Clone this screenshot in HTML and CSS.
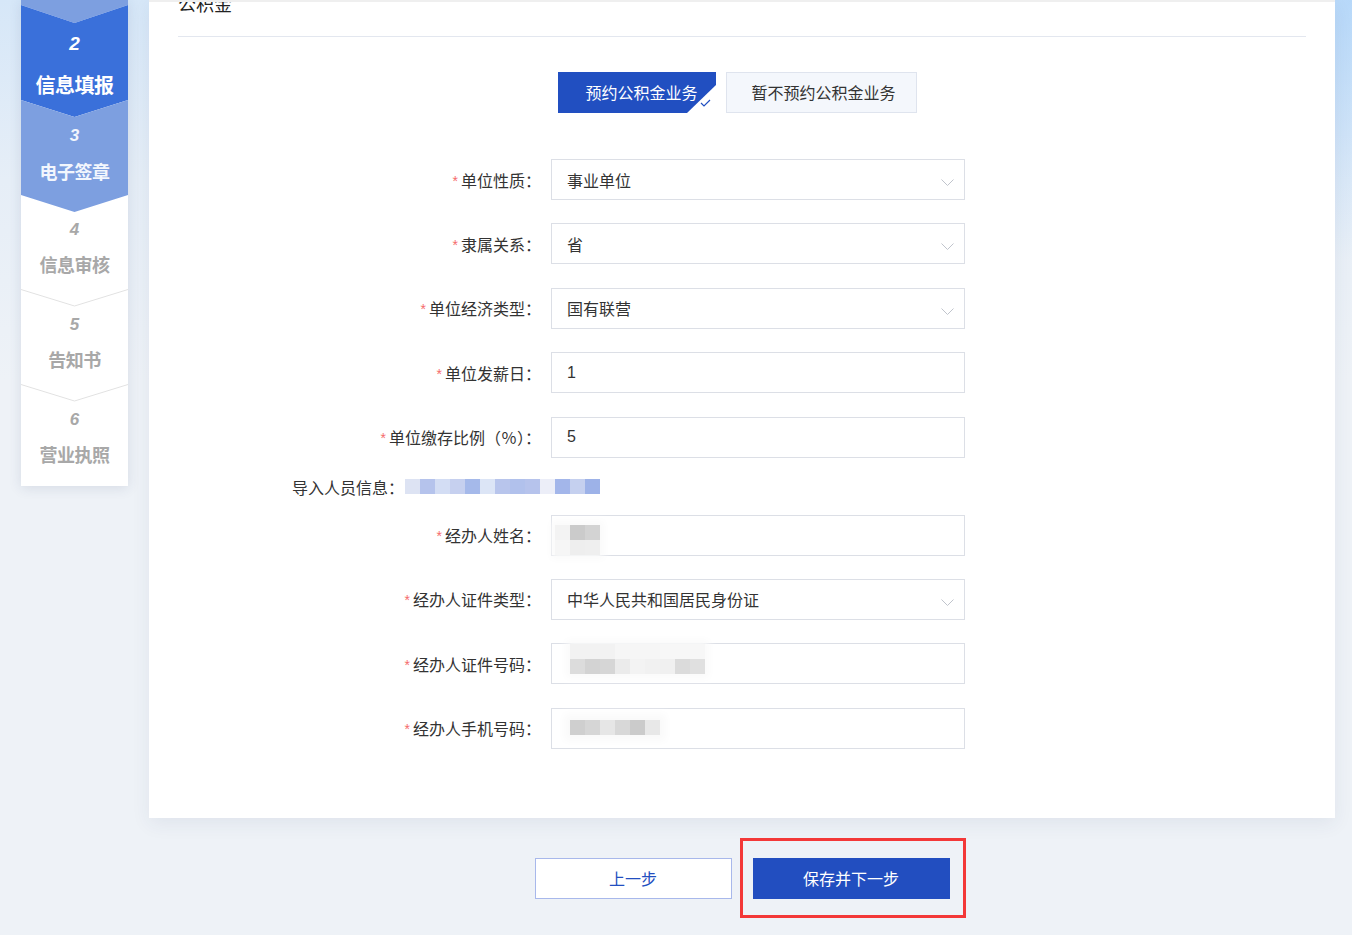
FILE: index.html
```html
<!DOCTYPE html>
<html>

<head>
    <title>公积金 - 信息填报</title>
    <meta charset="utf-8">
    <meta name="viewport" content="width=device-width, initial-scale=1">

    <link rel="stylesheet" href="styles.css">

</head>

<body>
    <div class="page">
        <aside class="steps">
            <div class="step tail"></div>
            <div class="step active">
                <span class="num">2</span>
                <span class="name">信息填报</span>
            </div>
            <div class="step done">
                <span class="num">3</span>
                <span class="name">电子签章</span>
            </div>
            <div class="step todo">
                <span class="num">4</span>
                <span class="name">信息审核</span>
                <svg class="sep" width="107" height="18" viewBox="0 0 107 18">
                    <polyline points="0,0.5 53.5,17 107,0.5" fill="none" stroke="#e2e2e2" stroke-width="1" />
                </svg>
            </div>
            <div class="step todo">
                <span class="num">5</span>
                <span class="name">告知书</span>
                <svg class="sep" width="107" height="18" viewBox="0 0 107 18">
                    <polyline points="0,0.5 53.5,17 107,0.5" fill="none" stroke="#e2e2e2" stroke-width="1" />
                </svg>
            </div>
            <div class="step todo last">
                <span class="num">6</span>
                <span class="name">营业执照</span>
            </div>
        </aside>

        <main class="main">
            <section class="panel">
                <h2 class="panelTitle">公积金</h2>

                <div class="choice">
                    <button class="opt selected">预约公积金业务
                        <svg class="tick" width="11" height="8" viewBox="0 0 11 8">
                            <polyline points="1,4 4,7 10,1" fill="none" stroke="#214fc1" stroke-width="1.2" />
                        </svg>
                    </button>
                    <button class="opt">暂不预约公积金业务</button>
                </div>

                <div class="form">
                    <div class="row">
                        <label class="lbl"><i>*</i>单位性质：</label>
                        <div class="field">事业单位
                            <svg class="arrow" width="13" height="8" viewBox="0 0 13 8">
                                <polyline points="0.5,0.5 6.5,6.5 12.5,0.5" fill="none" stroke="#c0c4cc" stroke-width="1" />
                            </svg>
                        </div>
                    </div>
                    <div class="row">
                        <label class="lbl"><i>*</i>隶属关系：</label>
                        <div class="field">省
                            <svg class="arrow" width="13" height="8" viewBox="0 0 13 8">
                                <polyline points="0.5,0.5 6.5,6.5 12.5,0.5" fill="none" stroke="#c0c4cc" stroke-width="1" />
                            </svg>
                        </div>
                    </div>
                    <div class="row">
                        <label class="lbl"><i>*</i>单位经济类型：</label>
                        <div class="field">国有联营
                            <svg class="arrow" width="13" height="8" viewBox="0 0 13 8">
                                <polyline points="0.5,0.5 6.5,6.5 12.5,0.5" fill="none" stroke="#c0c4cc" stroke-width="1" />
                            </svg>
                        </div>
                    </div>
                    <div class="row">
                        <label class="lbl"><i>*</i>单位发薪日：</label>
                        <div class="field">1</div>
                    </div>
                    <div class="row">
                        <label class="lbl"><i>*</i>单位缴存比例（％）：</label>
                        <div class="field">5</div>
                    </div>
                    <div class="importRow">
                        <span class="importLbl">导入人员信息：</span>
                        <span class="mosaic mImport"></span>
                    </div>
                    <div class="row">
                        <label class="lbl"><i>*</i>经办人姓名：</label>
                        <div class="field"><span class="mosaic mName"></span></div>
                    </div>
                    <div class="row">
                        <label class="lbl"><i>*</i>经办人证件类型：</label>
                        <div class="field">中华人民共和国居民身份证
                            <svg class="arrow" width="13" height="8" viewBox="0 0 13 8">
                                <polyline points="0.5,0.5 6.5,6.5 12.5,0.5" fill="none" stroke="#c0c4cc" stroke-width="1" />
                            </svg>
                        </div>
                    </div>
                    <div class="row">
                        <label class="lbl"><i>*</i>经办人证件号码：</label>
                        <div class="field"><span class="mosaic mId"></span></div>
                    </div>
                    <div class="row">
                        <label class="lbl"><i>*</i>经办人手机号码：</label>
                        <div class="field"><span class="mosaic mPhone"></span></div>
                    </div>
                </div>
            </section>

            <div class="actions">
                <button class="btn prev">上一步</button>
                <span class="marked">
                    <button class="btn next">保存并下一步</button>
                </span>
            </div>
        </main>
    </div>
</body>

</html>
```

FILE: styles.css
```css
* {
    box-sizing: border-box
}

html,
body {
    height: 100%;
}

body {
    margin: 0;
    overflow: hidden;
    font-family: "Liberation Sans", "Noto Sans CJK SC", sans-serif;
    color: #333;
    background:
        radial-gradient(ellipse 300px 260px at 100% 0, rgba(170, 210, 250, .7), rgba(170, 210, 250, 0)),
        linear-gradient(180deg, #d6e7f8 0, #e6eef7 180px, #eef2f7 380px, #eef2f7 100%);
}

.page {
    display: flex;
    align-items: flex-start;
}

/* step bar */
.steps {
    margin-left: 21px;
    width: 107px;
    background: #fff;
    display: flex;
    flex-direction: column;
    box-shadow: 0 2px 12px rgba(40, 60, 100, .12);
}

.step {
    position: relative;
    height: 112px;
    margin-top: -17px;
    padding-top: 25px;
    display: flex;
    flex-direction: column;
    align-items: center;
    color: #a8a8a8;
}

.step .num {
    font-size: 17px;
    line-height: 20px;
    font-weight: bold;
    font-style: italic;
}

.step .name {
    margin-top: 14px;
    font-size: 18px;
    line-height: 24px;
    font-weight: bold;
    letter-spacing: -0.5px;
}

.step.tail {
    height: 23px;
    margin-top: 0;
    padding: 0;
    background: #7d9fe0;
    clip-path: polygon(0 0, 100% 0, 100% 5px, 50% 23px, 0 5px);
}

.step.active {
    margin-top: -18px;
    padding-top: 28px;
    background: #3a70da;
    color: #fff;
    clip-path: polygon(0 0, 50% 18px, 100% 0, 100% 95px, 50% 112px, 0 95px);
}

.step.active .num {
    font-size: 19px;
    line-height: 22px;
}

.step.active .name {
    margin-top: 17px;
    font-size: 20px;
    line-height: 28px;
}

.step.done {
    padding-top: 26px;
    background: #7d9fe0;
    color: #f2f6fd;
    clip-path: polygon(0 0, 50% 17px, 100% 0, 100% 95px, 50% 112px, 0 95px);
}

.step.done .name {
    margin-top: 15px;
}

.step.last {
    height: 101px;
}

.sep {
    position: absolute;
    left: 0;
    bottom: 0;
}

/* main */
.main {
    margin-left: 21px;
    width: 1186px;
}

.panel {
    background: #fff;
    border-top: 2px solid #efefef;
    padding: 0 29px 69px;
    overflow: hidden;
    box-shadow: 0 6px 18px rgba(40, 60, 100, .07);
}

.panelTitle {
    margin: -9px 0 0;
    padding-bottom: 19px;
    font-size: 18px;
    line-height: 24px;
    font-weight: normal;
    color: #222;
    border-bottom: 1px solid #e3e7ef;
}

.choice {
    margin-top: 35px;
    padding-right: 9px;
    display: flex;
    justify-content: center;
    gap: 10px;
}

.opt {
    position: relative;
    height: 41px;
    padding: 0 20px 2px 24px;
    white-space: nowrap;
    font-family: inherit;
    font-size: 16px;
    color: #333;
    background: #f4f7fc;
    border: 1px solid #dfe4ee;
    cursor: pointer;
}

.opt.selected {
    width: 158px;
    padding: 0 0 2px 8px;
    background: #214fc1;
    border-color: #214fc1;
    color: #fff;
}

.opt.selected::after {
    content: "";
    position: absolute;
    right: -1px;
    bottom: -1px;
    border-style: solid;
    border-width: 0 0 28px 29px;
    border-color: transparent transparent #fff transparent;
}

.tick {
    position: absolute;
    right: 4px;
    bottom: 5px;
    z-index: 1;
}

/* form */
.form {
    margin-top: 46px;
    margin-left: 114px;
    width: 673px;
}

.row {
    display: flex;
    align-items: center;
    height: 41px;
}

.row + .row {
    margin-top: 23.4px;
}

.lbl {
    width: 249px;
    text-align: right;
    font-size: 16px;
    color: #333;
}

.lbl i {
    font-style: normal;
    color: #f56c6c;
    font-size: 14px;
    margin-right: 3px;
    position: relative;
    top: -1px;
}

.field {
    margin-left: 10px;
    width: 414px;
    height: 41px;
    border: 1px solid #dcdfe6;
    padding-left: 15px;
    display: flex;
    align-items: center;
    font-size: 16px;
    color: #333;
}

.arrow {
    margin-left: auto;
    margin-right: 10px;
    margin-top: 7px;
}

.importRow {
    margin-top: 19px;
    height: 20px;
    display: flex;
    align-items: center;
    font-size: 16px;
}

.importRow + .row {
    margin-top: 18px;
}

.importLbl {
    width: 113px;
}

.mosaic {
    display: block;
}

.mImport {
    width: 195px;
    height: 15px;
    background: linear-gradient(90deg,
            #dde3f3 0 15px, #b5c3ec 15px 30px, #d3ddf4 30px 45px, #c6d0ef 45px 60px,
            #a5b9ea 60px 75px, #dce5f6 75px 90px, #b8c5ec 90px 105px, #b1c1ec 105px 120px,
            #b6c3ec 120px 135px, #eceef8 135px 150px, #a3b6ea 150px 165px, #c5d0ef 165px 180px,
            #9db2e8 180px 195px);
}

.mName {
    width: 45px;
    height: 30px;
    margin-left: -12px;
    margin-top: 9px;
    background:
        linear-gradient(90deg, #f3f3f3 0 15px, #cbcbcb 15px 30px, #d3d3d3 30px 45px) top / 100% 15px no-repeat,
        linear-gradient(90deg, #f6f6f6 0 15px, #eeeeee 15px 30px, #efefef 30px 45px) bottom / 100% 15px no-repeat;
    box-shadow: 0 0 8px 4px #fafafa;
}

.mId {
    width: 135px;
    height: 30px;
    margin-left: 3px;
    margin-top: -9px;
    background:
        linear-gradient(90deg, #f2f2f2 0 45px, #f6f6f6 45px 90px, #f7f7f7 90px 135px) top / 100% 15px no-repeat,
        linear-gradient(90deg, #dcdcdc 0 15px, #d3d3d3 15px 30px, #d6d6d6 30px 45px, #ebebeb 45px 60px,
            #f3f3f3 60px 75px, #f1f1f1 75px 90px, #f0f0f0 90px 105px, #dbdbdb 105px 120px,
            #e0e0e0 120px 135px) bottom / 100% 15px no-repeat;
    box-shadow: 0 0 8px 4px #fafafa;
}

.mPhone {
    width: 90px;
    height: 15px;
    margin-left: 3px;
    margin-top: -2px;
    background: linear-gradient(90deg,
            #cfcfcf 0 15px, #d6d6d6 15px 30px, #e6e6e6 30px 45px, #d8d8d8 45px 60px,
            #cbcbcb 60px 75px, #e8e8e8 75px 90px);
    box-shadow: 0 0 8px 6px #fafafa;
}

/* bottom buttons */
.actions {
    margin-top: 40px;
    display: flex;
    justify-content: center;
    gap: 21px;
}

.btn {
    width: 197px;
    height: 41px;
    padding-bottom: 2px;
    font-family: inherit;
    font-size: 16px;
    cursor: pointer;
}

.prev {
    background: #fff;
    border: 1px solid #a8b8eb;
    color: #224ec0;
}

.next {
    background: #224ec0;
    border: 1px solid #224ec0;
    color: #fff;
}

.marked {
    position: relative;
    display: block;
}

.marked::after {
    content: "";
    position: absolute;
    top: -20px;
    left: -13px;
    right: -16px;
    bottom: -19px;
    border: 3px solid #f33838;
    pointer-events: none;
}
```
